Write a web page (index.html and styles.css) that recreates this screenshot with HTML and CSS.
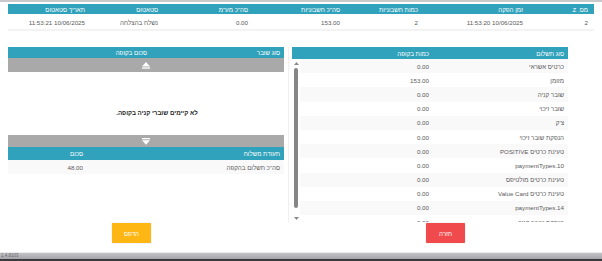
FILE: index.html
```html
<!DOCTYPE html>
<html lang="he" dir="rtl">

<head>
  <meta charset="UTF-8">
  <meta name="viewport" content="width=device-width, initial-scale=1.0">
  <title>סגירת קופה</title>
  <link rel="stylesheet" href="styles.css">
</head>

<body>
  <div class="topline"></div>
  <div class="page">
    <!-- דוחות Z -->
    <table class="grid zlist">
      <colgroup>
        <col style="width:65px">
        <col style="width:105px">
        <col style="width:78px">
        <col style="width:92px">
        <col style="width:90px">
        <col style="width:73px">
        <col>
      </colgroup>
      <thead>
        <tr>
          <th>מס. Z</th>
          <th>זמן הפקה</th>
          <th>כמות חשבוניות</th>
          <th>סה"כ חשבוניות</th>
          <th>סה"כ מע"מ</th>
          <th>סטאטוס</th>
          <th>תאריך סטאטוס</th>
        </tr>
      </thead>
      <tbody>
        <tr>
          <td>2</td>
          <td>10/06/2025 11:53:20</td>
          <td>2</td>
          <td>153.00</td>
          <td>0.00</td>
          <td>נשלח בהצלחה</td>
          <td>10/06/2025 11:53:21</td>
        </tr>
      </tbody>
    </table>

    <div class="panels">
      <!-- תשלומים -->
      <div class="payments">
        <table class="grid">
          <colgroup>
            <col style="width:135px">
            <col>
          </colgroup>
          <thead>
            <tr>
              <th>סוג תשלום</th>
              <th>כמות בקופה</th>
            </tr>
          </thead>
        </table>
        <div class="scroll">
          <div class="scroll-body">
            <table class="grid striped">
              <colgroup>
                <col style="width:135px">
                <col>
              </colgroup>
              <tbody>
                <tr><td>כרטיס אשראי</td><td>0.00</td></tr>
                <tr><td>מזומן</td><td>153.00</td></tr>
                <tr><td>שובר קניה</td><td>0.00</td></tr>
                <tr><td>שובר זיכוי</td><td>0.00</td></tr>
                <tr><td>צ'ק</td><td>0.00</td></tr>
                <tr><td>הנפקת שובר זיכוי</td><td>0.00</td></tr>
                <tr><td>טעינת כרטיס POSITIVE</td><td>0.00</td></tr>
                <tr><td>paymentTypes.10</td><td>0.00</td></tr>
                <tr><td>טעינת כרטיס מולטיפס</td><td>0.00</td></tr>
                <tr><td>טעינת כרטיס Value Card</td><td>0.00</td></tr>
                <tr><td>paymentTypes.14</td><td>0.00</td></tr>
                <tr><td>הנפקת שובר קניה</td><td>0.00</td></tr>
              </tbody>
            </table>
          </div>
          <div class="rail">
            <svg width="5" height="3" viewBox="0 0 5 3"><polygon points="2.5,0 5,3 0,3" fill="#8a8a8a"/></svg>
            <div class="thumb"></div>
            <svg class="rail-down" width="5" height="3" viewBox="0 0 5 3"><polygon points="0,0 5,0 2.5,3" fill="#8a8a8a"/></svg>
          </div>
        </div>
      </div>

      <!-- שוברים ותעודות משלוח -->
      <div class="vouchers">
        <table class="grid">
          <colgroup>
            <col style="width:133px">
            <col>
          </colgroup>
          <thead>
            <tr>
              <th>סוג שובר</th>
              <th>סכום בקופה</th>
            </tr>
          </thead>
        </table>
        <div class="pager">
          <svg width="8" height="7" viewBox="0 0 8 7"><polygon points="4,0 8,4.4 0,4.4" fill="#fff"/><rect x="0" y="5.4" width="8" height="1.3" fill="#fff"/></svg>
        </div>
        <div class="empty">לא קיימים שוברי קניה בקופה.</div>
        <div class="pager pager-down">
          <svg width="8" height="7" viewBox="0 0 8 7"><rect x="0" y="0" width="8" height="1.3" fill="#fff"/><polygon points="0,2.3 8,2.3 4,6.7" fill="#fff"/></svg>
        </div>
        <table class="grid notes">
          <colgroup>
            <col style="width:197px">
            <col>
          </colgroup>
          <thead>
            <tr>
              <th>תעודת משלוח</th>
              <th>סכום</th>
            </tr>
          </thead>
          <tbody>
            <tr><td>סה"כ תשלום בהקפה</td><td>48.00</td></tr>
          </tbody>
        </table>
      </div>
    </div>

    <div class="actions">
      <button class="btn btn-back">חזרה</button>
      <button class="btn btn-print">הדפס</button>
    </div>
  </div>

  <div class="taskbar"><span>1.4.8103</span></div>
</body>

</html>
```

FILE: styles.css
```css
* {
  margin: 0;
  padding: 0;
  box-sizing: border-box;
}

html,
body {
  background: #fff;
}

body {
  width: 602px;
  height: 261px;
  overflow: hidden;
  font-family: "Liberation Sans", Arial, sans-serif;
  font-size: 6.2px;
  color: #5a5a5a;
}

.topline {
  height: 2px;
  background: #c9c9cb;
}

.page {
  padding: 2px 8px 0;
}

/* טבלאות */
.grid {
  width: 100%;
  border-collapse: collapse;
  table-layout: fixed;
}

.grid th {
  background: #31a2bb;
  color: #fff;
  font-weight: normal;
  text-align: right;
  padding: 0 4px;
  height: 12px;
  white-space: nowrap;
}

.grid td {
  text-align: right;
  padding: 0 4px;
  white-space: nowrap;
}

.zlist th {
  height: 10px;
  padding: 0 6px;
}

.zlist td {
  height: 17px;
  padding: 0 6px;
  box-shadow: inset 0 -2px 0 #f3f3f3;
}

.panels {
  display: grid;
  grid-template-columns: 276px 281px;
  gap: 3px;
  width: 560px;
  margin: 16px 26px 0 0;
}

/* תשלומים */
.scroll {
  display: flex;
  height: 163px;
}

.scroll-body {
  flex: 1;
  overflow: hidden;
}

.striped td {
  height: 14.2px;
}

.striped tr:nth-child(odd) td {
  background: #f9f9f9;
}

.rail {
  width: 8px;
  display: flex;
  flex-direction: column;
  align-items: center;
  padding-top: 3px;
}

.thumb {
  width: 4px;
  height: 140px;
  margin-top: 3px;
  border-radius: 2px;
  background: #868686;
}

.rail-down {
  margin-top: 9px;
}

/* שוברים */
.vouchers {
  padding-right: 4px;
  border-right: 1px solid #efefef;
}

.vouchers > .grid:first-child th {
  height: 11px;
}

.pager {
  height: 14px;
  background: #a9a9a9;
  display: flex;
  align-items: center;
  justify-content: center;
}

.pager-down {
  height: 12px;
}

.empty {
  height: 63px;
  padding: 37px 0 0 22px;
  text-align: center;
  font-weight: bold;
  color: #222;
}

.notes th {
  height: 13px;
}

.notes td {
  height: 14px;
  background: #f9f9f9;
}

/* כפתורים */
.actions {
  display: flex;
  gap: 275px;
  padding-right: 129px;
  margin-top: 1px;
}

.btn {
  width: 39px;
  height: 20px;
  border: none;
  border-radius: 1px;
  color: #fff;
  font-family: inherit;
  font-size: 6.2px;
  box-shadow: 0 0 1px rgba(0, 0, 0, .35);
}

.btn-back {
  background: #f04a4c;
}

.btn-print {
  background: #fdb614;
}

.taskbar {
  margin-top: 9px;
  height: 9px;
  border-top: 1px solid #ececec;
  border-bottom: 2px solid #3a3a3c;
  background: linear-gradient(#c4c4c8, #a4a4a9);
  direction: ltr;
  font-size: 4.5px;
  color: #6a6a6a;
  padding-left: 1px;
  line-height: 5px;
}
```
